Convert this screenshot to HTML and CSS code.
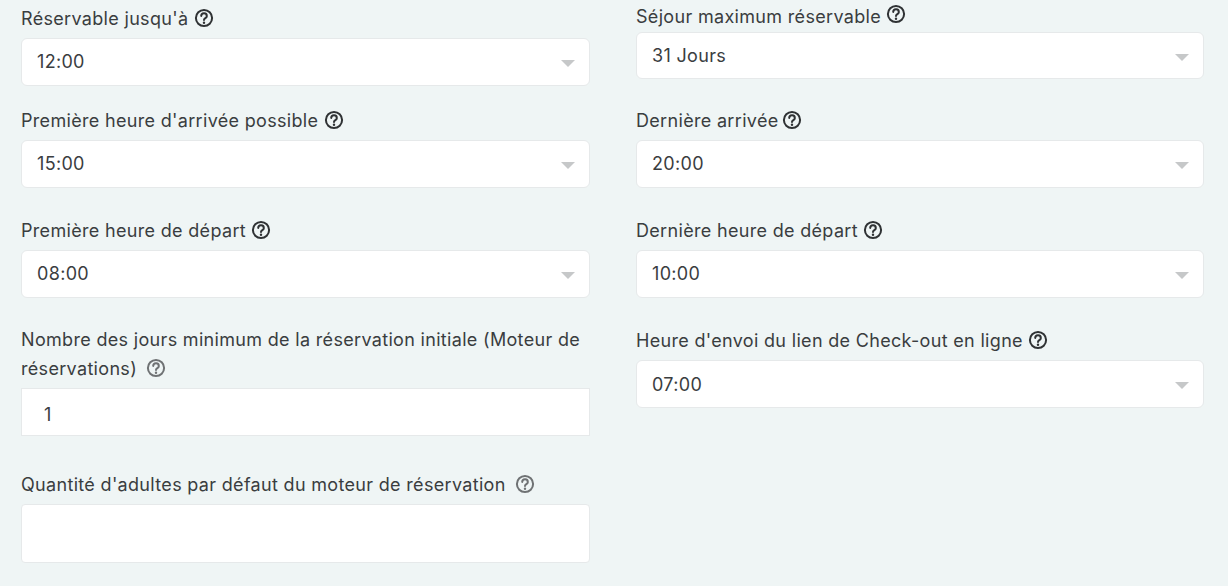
FILE: index.html
```html
<!DOCTYPE html>
<html lang="fr">
<head>
<meta charset="utf-8">
<title>Réservation</title>
<link rel="stylesheet" href="styles.css">
</head>
<body>
<svg class="defs" width="0" height="0" aria-hidden="true">
  <symbol id="help" viewBox="0 0 20 20">
    <circle cx="10" cy="10" r="8.1" fill="none" stroke="currentColor" stroke-width="2"/>
    <path d="M7.2 7.9a2.8 2.8 0 0 1 5.6.3c0 1.9-2.8 2-2.8 3.8" fill="none" stroke="currentColor" stroke-width="2" stroke-linecap="round"/>
    <circle cx="10" cy="14.7" r="1.2" fill="currentColor"/>
  </symbol>
</svg>
<main class="form">
  <section class="col col-left">
    <div class="field f1">
      <label class="label">Réservable jusqu'à <svg class="help"><use href="#help"/></svg></label>
      <div class="select"><span class="value">12:00</span><span class="caret"></span></div>
    </div>
    <div class="field f2">
      <label class="label">Première heure d'arrivée possible <svg class="help"><use href="#help"/></svg></label>
      <div class="select"><span class="value">15:00</span><span class="caret"></span></div>
    </div>
    <div class="field f3">
      <label class="label">Première heure de départ <svg class="help"><use href="#help"/></svg></label>
      <div class="select"><span class="value">08:00</span><span class="caret"></span></div>
    </div>
    <div class="field f4">
      <label class="label">Nombre des jours minimum de la réservation initiale (Moteur de réservations) <svg class="help muted"><use href="#help"/></svg></label>
      <div class="input"><span class="input-value">1</span></div>
    </div>
    <div class="field f5">
      <label class="label">Quantité d'adultes par défaut du moteur de réservation <svg class="help muted"><use href="#help"/></svg></label>
      <div class="input tall"></div>
    </div>
  </section>
  <section class="col col-right">
    <div class="field r1">
      <label class="label">Séjour maximum réservable <svg class="help raised"><use href="#help"/></svg></label>
      <div class="select short"><span class="value low">31 Jours</span><span class="caret"></span></div>
    </div>
    <div class="field r2">
      <label class="label">Dernière arrivée <svg class="help tight"><use href="#help"/></svg></label>
      <div class="select"><span class="value">20:00</span><span class="caret"></span></div>
    </div>
    <div class="field r3">
      <label class="label">Dernière heure de départ <svg class="help"><use href="#help"/></svg></label>
      <div class="select"><span class="value">10:00</span><span class="caret"></span></div>
    </div>
    <div class="field r4">
      <label class="label">Heure d'envoi du lien de Check-out en ligne <svg class="help"><use href="#help"/></svg></label>
      <div class="select"><span class="value low">07:00</span><span class="caret"></span></div>
    </div>
  </section>
</main>
</body>
</html>
```
FILE: styles.css
```css
* { box-sizing: border-box; }
html, body { margin: 0; height: 586px; overflow: hidden; }
body {
  background: #eff5f5;
  color: #3a3d3f;
  font-family: Inter, "Liberation Sans", sans-serif;
  font-size: 18px;
  letter-spacing: 0.32px;
}
.defs { position: absolute; }
.form {
  display: grid;
  grid-template-columns: 569px 568px;
  column-gap: 46px;
  padding: 0 0 0 21px;
}
.col { display: flex; flex-direction: column; }
.label {
  display: block;
  line-height: 29px;
  margin-bottom: 5px;
}
.help {
  width: 20px;
  height: 20px;
  vertical-align: -3px;
  color: #2f3234;
}
.help.muted { color: #6f7274; margin-left: 4px; }
.help.raised { vertical-align: -1px; }
.help.tight { margin-left: -2px; }
.select, .input {
  height: 48px;
  display: flex;
  align-items: center;
  background: #fff;
  border: 1px solid #e6e9ea;
}
.select {
  position: relative;
  padding-left: 15px;
  border-radius: 6px;
}
.value { position: relative; top: -1px; }
.value.low { top: 0; }
.input-value { position: relative; top: 2px; }
.select.short { height: 47px; }
.input { padding-left: 22px; }
.input.tall { height: 59px; border-radius: 4px; }
.caret {
  position: absolute;
  right: 14px;
  top: 50%;
  margin-top: -2px;
  border-left: 7px solid transparent;
  border-right: 7px solid transparent;
  border-top: 7px solid #c6c8c9;
}
.f1 { margin-top: 4px; }
.f2 { margin-top: 20px; }
.f3 { margin-top: 28px; }
.f4 { margin-top: 27px; }
.f5 { margin-top: 34px; }
.r1 { margin-top: 2px; }
.r1 .label { margin-bottom: 1px; }
.r2 { margin-top: 27px; }
.r3 { margin-top: 28px; }
.r4 { margin-top: 28px; }
```
